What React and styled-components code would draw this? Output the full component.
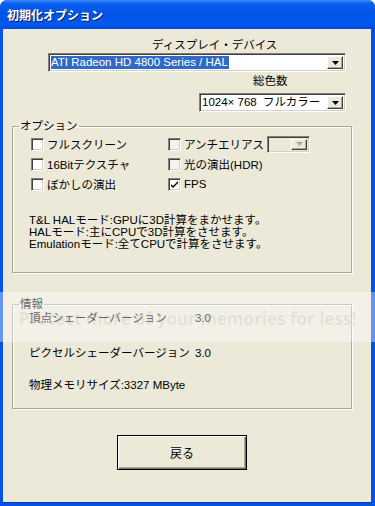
import React from 'react';
import styled, { createGlobalStyle } from 'styled-components';

const GlobalStyle = createGlobalStyle`
    html, body {
        margin: 0;
        padding: 0;
        background: #fff;
    }
    body {
        font-family: "Liberation Sans", "Noto Sans CJK JP", sans-serif;
        font-size: 11.5px;
        color: #000;
    }
`;

const Window = styled.div`
    position: relative;
    width: 375px;
    height: 506px;
    display: flex;
    flex-direction: column;
    background: #0553e4;
    border-radius: 7px 7px 0 0;
    overflow: hidden;
`;

const TitleBar = styled.div`
    height: 29px;
    flex: none;
    display: flex;
    align-items: center;
    padding-left: 7px;
    background: linear-gradient(to bottom, #3c8cf8 0%, #0a5ef0 12%, #0054e6 45%, #0058ee 85%, #0048d8 100%);
    color: #fff;
    font-family: "Noto Sans CJK JP", sans-serif;
    font-weight: bold;
    font-size: 12px;
    text-shadow: 1px 1px 0 #0a1f6e;
`;

const Client = styled.div`
    flex: 1;
    margin: 0 4px 4px 3px;
    padding-top: 10px;
    background: #ece9d8;
    display: flex;
    flex-direction: column;
    box-shadow: 0 1px 0 #0038b8;
`;

const DisplayArea = styled.div`
    display: flex;
    flex-direction: column;
    padding-left: 45px;
`;

const Caption = styled.div`
    line-height: 12px;
    height: 12px;
    margin-left: ${p => p.indent}px;
    margin-top: ${p => p.top || 0}px;
    white-space: nowrap;
`;

const ComboBox = styled.div`
    box-sizing: border-box;
    width: ${p => p.w}px;
    height: ${p => p.h}px;
    margin-left: ${p => p.indent || 0}px;
    margin-top: ${p => p.top || 0}px;
    display: flex;
    align-items: center;
    background: ${p => (p.disabled ? '#ece9d8' : '#fff')};
    border: 1px solid;
    border-color: #808080 #fff #fff #808080;
    box-shadow: inset 1px 1px 0 #404040, inset -1px -1px 0 #d4d0c8;
    padding: 2px;
    flex: none;
`;

const ComboText = styled.span`
    flex: 1;
    line-height: 13px;
    white-space: pre;
    overflow: hidden;
`;

const Highlight = styled.span`
    background: #316ac5;
    color: #fff;
    padding: 0 1px 1px 0;
`;

const ArrowButton = styled.span`
    box-sizing: border-box;
    width: 16px;
    align-self: stretch;
    display: flex;
    align-items: center;
    justify-content: center;
    background: #ece9d8;
    border: 1px solid;
    border-color: #fff #404040 #404040 #fff;
    box-shadow: inset -1px -1px 0 #aca899;
    flex: none;
`;

const Group = styled.fieldset`
    margin: ${p => p.top}px 19px 0 9px;
    padding: 0 0 ${p => p.bottom}px 0;
    border: 1px solid #aca899;
    box-shadow: 1px 1px 0 #fff, inset 1px 1px 0 #fff;
    min-width: 0;
`;

const Legend = styled.legend`
    margin-left: 6px;
    padding: 0 1px;
    line-height: 12px;
`;

const OptionGrid = styled.div`
    display: grid;
    grid-template-columns: 137px auto;
    grid-auto-rows: 20px;
    margin: 2px 0 0 18px;
`;

const OptionItem = styled.label`
    display: flex;
    align-items: center;
    gap: 3px;
    white-space: nowrap;
`;

const Box = styled.span`
    box-sizing: border-box;
    width: 13px;
    height: 13px;
    display: flex;
    align-items: center;
    justify-content: center;
    background: ${p => (p.dim ? '#f3f2ec' : '#fff')};
    border: 1px solid;
    border-color: #808080 #fff #fff #808080;
    box-shadow: inset 1px 1px 0 #404040, inset -1px -1px 0 #d4d0c8;
    flex: none;
`;

const Description = styled.div`
    margin: 20px 0 0 16px;
    line-height: 12px;
    white-space: nowrap;
`;

const InfoRow = styled.div`
    display: grid;
    grid-template-columns: 166px auto;
    margin: ${p => p.top}px 0 0 16px;
    line-height: 12px;
    white-space: nowrap;
`;

const BackButton = styled.button`
    box-sizing: border-box;
    width: 130px;
    height: 35px;
    margin: 26px 0 0 114px;
    padding: 0;
    font: inherit;
    font-size: 12px;
    background: #ece9d8;
    border: 1px solid #000;
    box-shadow: inset 1px 1px 0 #fff, inset -1px -1px 0 #716f64, inset -2px -2px 0 #aca899;
    cursor: pointer;
`;

// photobucket banner lying over the screenshot
const Watermark = styled.div`
    position: absolute;
    left: 0;
    right: 0;
    top: 292px;
    height: 48px;
    background: rgba(255, 255, 255, 0.38);
    display: flex;
    align-items: center;
    justify-content: center;
    padding-top: 2px;
    color: rgba(120, 118, 100, 0.13);
    font-family: "Open Sans", sans-serif;
    font-weight: bold;
    font-size: 17px;
    white-space: nowrap;
    pointer-events: none;
`;

const Arrow = ({ disabled }) => (
    <svg width="7" height="4" viewBox="0 0 7 4">
        <path d="M0 0h7L3.5 4z" fill={disabled ? '#aca899' : '#000'} />
    </svg>
);

const Check = () => (
    <svg width="9" height="9" viewBox="0 0 9 9">
        <path d="M1 4l2 2 5-5v2L3 8 1 6z" fill="#000" />
    </svg>
);

const Combo = ({ children, disabled, ...rest }) => (
    <ComboBox disabled={disabled} {...rest}>
        <ComboText>{children}</ComboText>
        <ArrowButton>
            <Arrow disabled={disabled} />
        </ArrowButton>
    </ComboBox>
);

const Option = ({ label, checked, dim, children }) => (
    <OptionItem>
        <Box dim={dim}>{checked && <Check />}</Box>
        <span>{label}</span>
        {children}
    </OptionItem>
);

const App = () => (
    <>
        <GlobalStyle />
        <Window>
            <TitleBar>初期化オプション</TitleBar>
            <Client>
                <DisplayArea>
                    <Caption indent={104}>ディスプレイ・デバイス</Caption>
                    <Combo w={298} h={19} top={2}>
                        <Highlight>ATI Radeon HD 4800 Series / HAL</Highlight>
                    </Combo>
                    <Caption indent={205} top={3}>総色数</Caption>
                    <Combo w={147} h={19} indent={151} top={6}>
                        {'1024× 768  フルカラー'}
                    </Combo>
                </DisplayArea>

                <Group top={8} bottom={22}>
                    <Legend>オプション</Legend>
                    <OptionGrid>
                        <Option label="フルスクリーン" />
                        <Option label="アンチエリアス" dim>
                            <Combo w={43} h={17} disabled />
                        </Option>
                        <Option label="16Bitテクスチャ" />
                        <Option label="光の演出(HDR)" dim />
                        <Option label="ぼかしの演出" />
                        <Option label="FPS" checked />
                    </OptionGrid>
                    <Description>
                        T&amp;L HALモード:GPUに3D計算をまかせます。<br />
                        HALモード:主にCPUで3D計算をさせます。<br />
                        Emulationモード:全てCPUで計算をさせます。
                    </Description>
                </Group>

                <Group top={25} bottom={17}>
                    <Legend>情報</Legend>
                    <InfoRow top={2}>
                        <span>頂点シェーダーバージョン</span>
                        <span>3.0</span>
                    </InfoRow>
                    <InfoRow top={23}>
                        <span>ピクセルシェーダーバージョン</span>
                        <span>3.0</span>
                    </InfoRow>
                    <InfoRow top={20}>
                        <span>物理メモリサイズ:3327 MByte</span>
                    </InfoRow>
                </Group>

                <div>
                    <BackButton type="button">戻る</BackButton>
                </div>
            </Client>
            <Watermark>Protect more of your memories for less!</Watermark>
        </Window>
    </>
);

export default App;
